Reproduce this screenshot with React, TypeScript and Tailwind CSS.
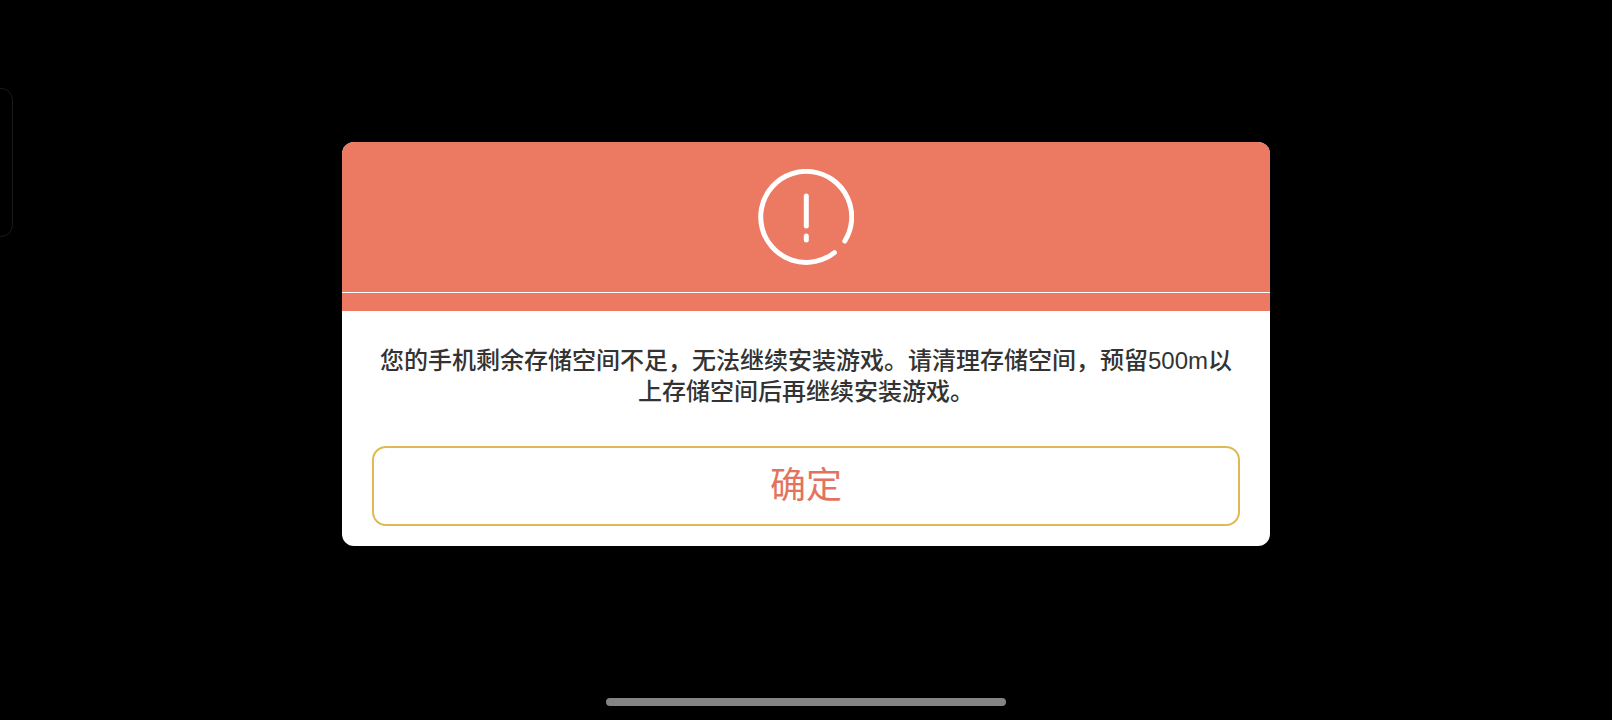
function WarningIcon() {
  return (
    <svg
      viewBox="0 0 96 96"
      className="h-24 w-24"
      fill="none"
      stroke="white"
      strokeWidth="5"
      strokeLinecap="round"
      aria-hidden="true"
    >
      <path d="M76.4 83.6A45.5 45.5 0 1 1 86.8 72" />
      <path d="M48.3 27v30M48.3 67v4" />
    </svg>
  );
}

function StorageDialog() {
  return (
    <section
      role="alertdialog"
      aria-modal="true"
      aria-describedby="storage-message"
      className="w-full max-w-[928px] overflow-hidden rounded-xl bg-white"
    >
      <header className="bg-[#ec7a62]">
        <div className="flex justify-center border-b border-white py-[27px]">
          <WarningIcon />
        </div>
        <div className="h-[18px]" />
      </header>
      <div className="px-[30px] pt-[34px] pb-5">
        <p
          id="storage-message"
          className="text-center text-2xl leading-[31px] font-medium text-[#333333]"
        >
          您的手机剩余存储空间不足，无法继续安装游戏。请清理存储空间，预留500m以上存储空间后再继续安装游戏。
        </p>
        <button
          type="button"
          className="mt-[39px] flex h-20 w-full items-center justify-center rounded-[14px] border-2 border-[#deb954] text-4xl leading-10 text-[#e2745f]"
        >
          确定
        </button>
      </div>
    </section>
  );
}

export default function App() {
  return (
    <div className="relative flex min-h-screen flex-col overflow-hidden bg-black font-['Liberation_Sans','Noto_Sans_CJK_SC',sans-serif]">
      <div className="absolute top-[88px] -left-4 h-[149px] w-[29px] rounded-xl border border-[#1c1a14]" />
      <main className="flex flex-1 items-center justify-center">
        <StorageDialog />
      </main>
      <footer className="flex justify-center pt-2.5 pb-3.5">
        <div className="h-2 w-full max-w-[400px] rounded-full bg-[#848484]" />
      </footer>
    </div>
  );
}
